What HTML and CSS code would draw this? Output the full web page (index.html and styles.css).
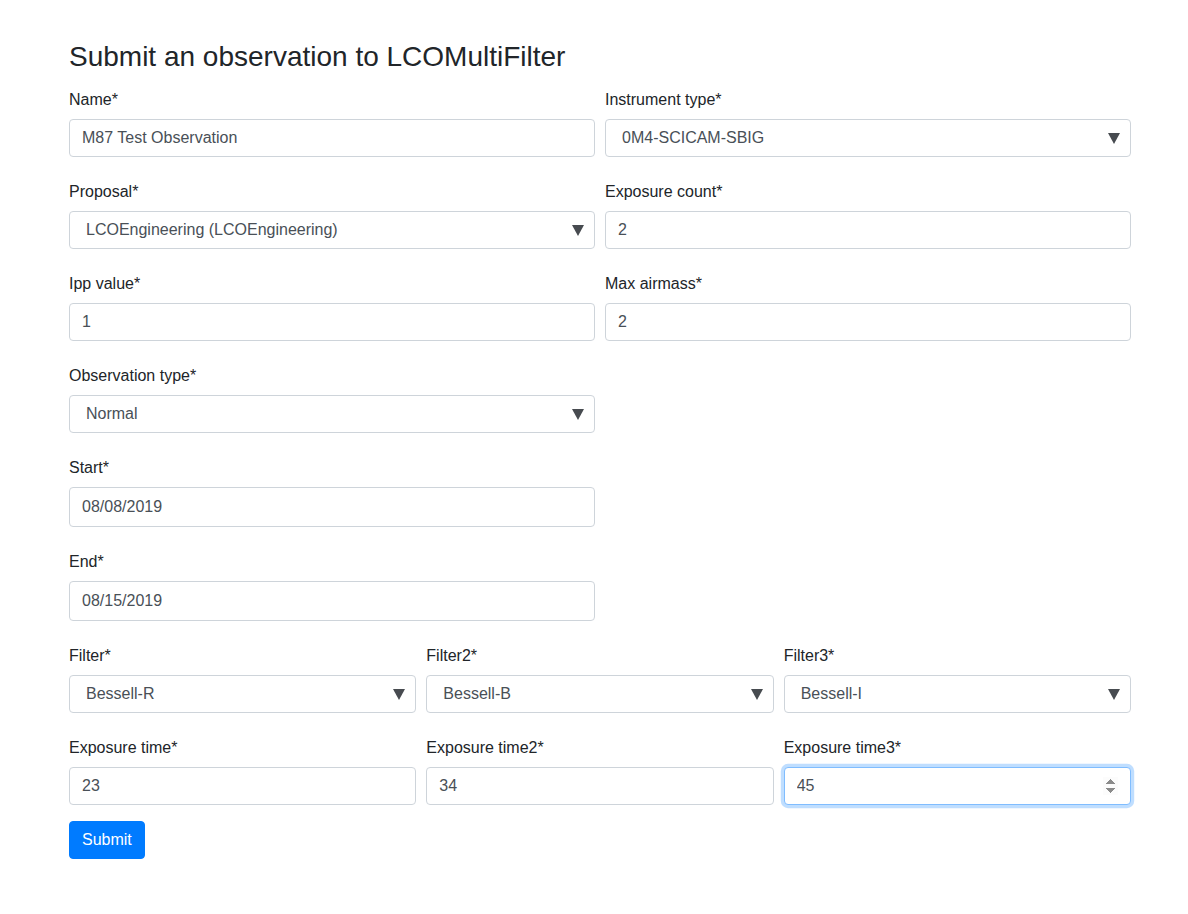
FILE: index.html
```html
<!DOCTYPE html>
<html lang="en">
<head>
<meta charset="UTF-8">
<meta name="viewport" content="width=device-width, initial-scale=1.0">
<title>Submit an observation</title>
<link rel="stylesheet" href="styles.css">
</head>
<body>
<div class="container">
    <h3>Submit an observation to LCOMultiFilter</h3>
    <form id="observationForm">
        <div class="form-row two">
            <div class="form-group">
                <label for="name">Name*</label>
                <input type="text" id="name" class="form-control" value="M87 Test Observation">
            </div>
            <div class="form-group">
                <label for="instrument">Instrument type*</label>
                <select id="instrument" class="form-control">
                    <option>0M4-SCICAM-SBIG</option>
                </select>
            </div>
        </div>

        <div class="form-row two">
            <div class="form-group">
                <label for="proposal">Proposal*</label>
                <select id="proposal" class="form-control">
                    <option>LCOEngineering (LCOEngineering)</option>
                </select>
            </div>
            <div class="form-group">
                <label for="exposureCount">Exposure count*</label>
                <input type="text" id="exposureCount" class="form-control" value="2">
            </div>
        </div>

        <div class="form-row two">
            <div class="form-group">
                <label for="ipp">Ipp value*</label>
                <input type="text" id="ipp" class="form-control" value="1">
            </div>
            <div class="form-group">
                <label for="airmass">Max airmass*</label>
                <input type="text" id="airmass" class="form-control" value="2">
            </div>
        </div>

        <div class="form-row two">
            <div class="form-group">
                <label for="obsType">Observation type*</label>
                <select id="obsType" class="form-control">
                    <option>Normal</option>
                </select>
            </div>
        </div>

        <div class="form-row two">
            <div class="form-group">
                <label for="start">Start*</label>
                <input type="text" id="start" class="form-control date" value="08/08/2019">
            </div>
        </div>

        <div class="form-row two">
            <div class="form-group">
                <label for="end">End*</label>
                <input type="text" id="end" class="form-control date" value="08/15/2019">
            </div>
        </div>

        <div class="form-row three">
            <div class="form-group">
                <label for="filter">Filter*</label>
                <select id="filter" class="form-control">
                    <option>Bessell-R</option>
                </select>
            </div>
            <div class="form-group">
                <label for="filter2">Filter2*</label>
                <select id="filter2" class="form-control">
                    <option>Bessell-B</option>
                </select>
            </div>
            <div class="form-group">
                <label for="filter3">Filter3*</label>
                <select id="filter3" class="form-control">
                    <option>Bessell-I</option>
                </select>
            </div>
        </div>

        <div class="form-row three last">
            <div class="form-group">
                <label for="exp1">Exposure time*</label>
                <input type="text" id="exp1" class="form-control" value="23">
            </div>
            <div class="form-group">
                <label for="exp2">Exposure time2*</label>
                <input type="text" id="exp2" class="form-control" value="34">
            </div>
            <div class="form-group">
                <label for="exp3">Exposure time3*</label>
                <input type="number" id="exp3" class="form-control" value="45" autofocus>
            </div>
        </div>

        <button type="submit" class="btn btn-primary">Submit</button>
    </form>
</div>
</body>
</html>
```

FILE: styles.css
```css
body {
    font-family: "Liberation Sans", Arial, sans-serif;
    font-size: 16px;
    line-height: 1.5;
    color: #212529;
    background-color: #fff;
    margin: 0;
    padding: 0;
}
.container {
    width: 1062px;
    margin-left: 69px;
}
h3 {
    font-size: 28px;
    font-weight: 500;
    line-height: 1.2;
    margin: 40px 0 14px;
}
.form-row {
    display: grid;
    gap: 10px;
}
.form-row.two {
    grid-template-columns: repeat(2, 1fr);
}
.form-row.three {
    grid-template-columns: repeat(3, 1fr);
}
.form-group {
    margin-bottom: 23px;
}
.form-row.last .form-group {
    margin-bottom: 16px;
}
label {
    display: block;
    margin-bottom: 7px;
}
.form-control {
    display: block;
    width: 100%;
    height: 38px;
    padding: 6px 12px;
    font-family: inherit;
    font-size: 16px;
    line-height: 1.5;
    color: #495057;
    background-color: #fff;
    border: 1px solid #ced4da;
    border-radius: 4px;
    box-sizing: border-box;
    margin: 0;
}
.form-control.date {
    height: 40px;
}
.form-control:focus {
    border-color: #80bdff;
    outline: 0;
    box-shadow: 0 0 0 3.2px rgba(0, 123, 255, .25);
}
select.form-control {
    -webkit-appearance: none;
    appearance: none;
    padding-left: 16px;
    background-image: url("data:image/svg+xml,%3Csvg xmlns='http://www.w3.org/2000/svg' width='12' height='12' viewBox='0 0 12 12'%3E%3Cpath d='M0 1h12L6 12z' fill='%23474b50'/%3E%3C/svg%3E");
    background-repeat: no-repeat;
    background-position: right 10px center;
    background-size: 12px 12px;
}
.btn {
    display: inline-block;
    font-family: inherit;
    font-size: 16px;
    line-height: 1.5;
    padding: 6px 12px;
    border: 1px solid transparent;
    border-radius: 4px;
    cursor: pointer;
}
.btn-primary {
    color: #fff;
    background-color: #007bff;
    border-color: #007bff;
}
```
